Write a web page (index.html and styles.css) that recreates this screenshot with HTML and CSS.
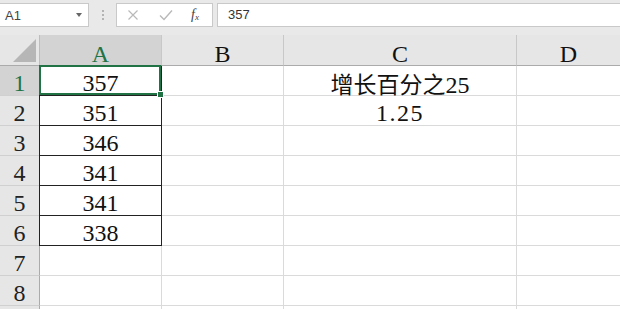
FILE: index.html
```html
<!DOCTYPE html>
<html>
<head>
<meta charset="utf-8">
<link rel="stylesheet" href="styles.css">
</head>
<body>
<div class="topbar">
  <div class="namebox"><span class="name">A1</span><span class="caret"></span></div>
  <div class="grip"><span></span><span></span><span></span></div>
  <div class="fxbox">
    <svg class="ico" width="12" height="12" viewBox="0 0 12 12"><path d="M1.5 1.5L10.5 10.5M10.5 1.5L1.5 10.5" stroke="#b9b9b9" stroke-width="1.2" fill="none"/></svg>
    <svg class="ico" width="14" height="12" viewBox="0 0 14 12"><path d="M1 6.5L5 10.5L13 1.5" stroke="#b9b9b9" stroke-width="1.4" fill="none"/></svg>
    <span class="fx">f<sub>x</sub></span>
  </div>
  <div class="formula">357</div>
</div>
<div class="sheet">
  <div class="corner"><span class="tri"></span></div>
  <div class="ch sel">A</div>
  <div class="ch">B</div>
  <div class="ch">C</div>
  <div class="ch">D</div>

  <div class="rh sel">1</div>
  <div class="c data active">357</div>
  <div class="c"></div>
  <div class="c"><span class="cjk">增长百分之</span><span class="num">25</span></div>
  <div class="c"></div>

  <div class="rh">2</div>
  <div class="c data">351</div>
  <div class="c"></div>
  <div class="c"><span class="wide">1.25</span></div>
  <div class="c"></div>

  <div class="rh">3</div>
  <div class="c data">346</div>
  <div class="c"></div>
  <div class="c"></div>
  <div class="c"></div>

  <div class="rh">4</div>
  <div class="c data">341</div>
  <div class="c"></div>
  <div class="c"></div>
  <div class="c"></div>

  <div class="rh">5</div>
  <div class="c data">341</div>
  <div class="c"></div>
  <div class="c"></div>
  <div class="c"></div>

  <div class="rh">6</div>
  <div class="c data">338</div>
  <div class="c"></div>
  <div class="c"></div>
  <div class="c"></div>

  <div class="rh">7</div>
  <div class="c"></div>
  <div class="c"></div>
  <div class="c"></div>
  <div class="c"></div>

  <div class="rh">8</div>
  <div class="c"></div>
  <div class="c"></div>
  <div class="c"></div>
  <div class="c"></div>

  <div class="rh"></div>
  <div class="c"></div>
  <div class="c"></div>
  <div class="c"></div>
  <div class="c"></div>
</div>
</body>
</html>
```
FILE: styles.css
```css
* { box-sizing: border-box; }
html, body { margin: 0; padding: 0; overflow: hidden; }
body { width: 620px; height: 309px; background: #fff; font-family: "Liberation Sans", Arial, sans-serif; }

.topbar {
  height: 35px;
  background: #e9e9e9;
  display: flex;
  align-items: flex-start;
  padding-top: 3px;
}
.namebox {
  width: 89px;
  height: 24px;
  background: #fff;
  border: 1px solid #c9c9c9;
  border-left: none;
  display: flex;
  align-items: center;
  justify-content: space-between;
  padding: 0 6px 0 5px;
  font-size: 13px;
  color: #444;
}
.caret {
  width: 0; height: 0;
  border-left: 3.5px solid transparent;
  border-right: 3.5px solid transparent;
  border-top: 4px solid #666;
}
.grip {
  width: 27px;
  height: 24px;
  display: flex;
  flex-direction: column;
  align-items: center;
  justify-content: center;
  gap: 2px;
}
.grip span { width: 2px; height: 2px; background: #b3b3b3; }
.fxbox {
  width: 97px;
  height: 24px;
  background: #fff;
  border: 1px solid #c9c9c9;
  display: flex;
  align-items: center;
  padding: 0 0 0 10px;
  gap: 20px;
}
.fxbox .ico { flex: none; }
.fx {
  font-family: "Liberation Serif", serif;
  font-style: italic;
  font-size: 14px;
  color: #444;
  margin-left: -2px;
}
.fx sub { font-size: 9px; vertical-align: -1px; }
.formula {
  flex: 1;
  height: 24px;
  margin-left: 4px;
  background: #fff;
  border: 1px solid #c9c9c9;
  border-right: none;
  font-size: 13px;
  color: #333;
  padding-left: 10px;
  line-height: 22px;
}

.sheet {
  display: grid;
  grid-template-columns: 40px 122px 122px 233px 104px;
  grid-template-rows: 31px;
  grid-auto-rows: 30px;
  font-family: "Liberation Serif", "Noto Sans CJK SC", serif;
  font-size: 24px;
}
.corner, .ch, .rh {
  background: #e6e6e6;
}
.corner {
  position: relative;
  border-right: 1px solid #bdbdbd;
  border-bottom: 1px solid #ababab;
}
.tri {
  position: absolute;
  right: 3px;
  bottom: 3px;
  width: 0; height: 0;
  border-left: 23px solid transparent;
  border-bottom: 23px solid #b6b6b6;
}
.ch {
  border-right: 1px solid #c8c8c8;
  border-bottom: 1px solid #ababab;
  text-align: center;
  line-height: 30px;
  padding-top: 4px;
  color: #111;
}
.ch.sel { background: #d3d3d3; color: #217346; border-bottom-color: #217346; }
.rh {
  border-right: 1px solid #ababab;
  border-bottom: 1px solid #d0d0d0;
  text-align: center;
  line-height: 30px;
  padding-top: 2px;
  color: #222;
}
.rh.sel { background: #d3d3d3; color: #217346; border-right-color: #217346; }
.c {
  border-right: 1px solid #dadada;
  border-bottom: 1px solid #dadada;
  text-align: center;
  line-height: 30px;
  padding-top: 2px;
  color: #111;
  white-space: nowrap;
}
.cjk { font-family: "Noto Sans CJK SC", sans-serif; font-size: 23px; }
.num { font-family: "Liberation Serif", serif; }
.wide { letter-spacing: 1.5px; }
.c.data {
  border-right-color: #222;
  border-bottom-color: #222;
  box-shadow: -1px 0 0 #222;
}
.c.active { position: relative; }
.c.active::after {
  content: "";
  position: absolute;
  top: -1px;
  left: -1px;
  right: 0;
  bottom: 0;
  border: 2px solid #217346;
}
.c.active::before {
  content: "";
  position: absolute;
  right: -3px;
  bottom: -3px;
  width: 5px;
  height: 5px;
  background: #217346;
  border: 1px solid #fff;
  z-index: 2;
}
```
